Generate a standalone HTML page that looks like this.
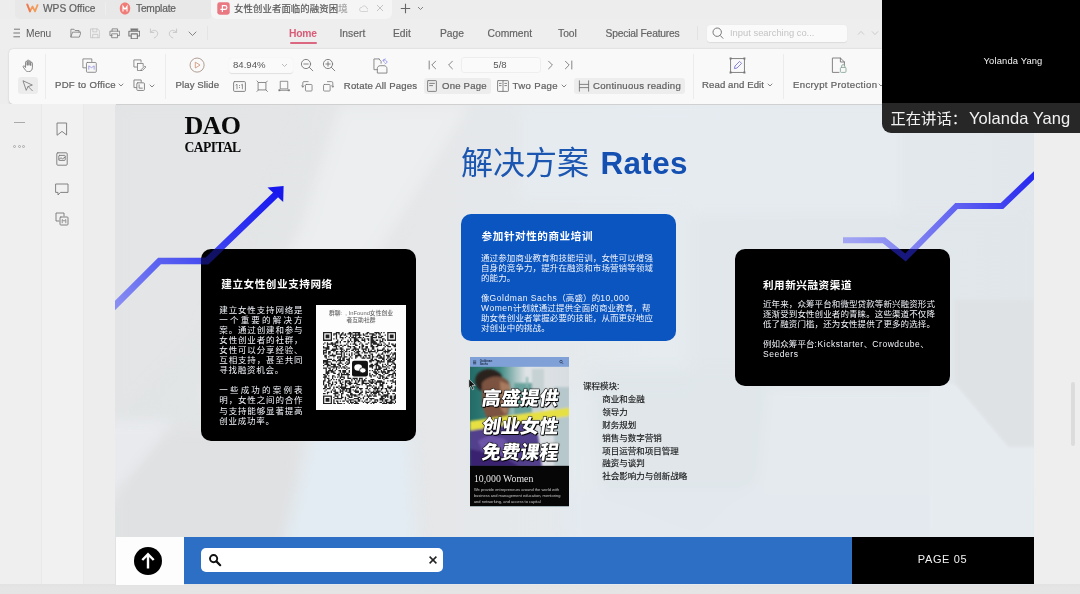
<!DOCTYPE html>
<html lang="zh">
<head>
<meta charset="utf-8">
<title>WPS Office - 女性创业者面临的融资困境</title>
<style>
*{box-sizing:border-box;margin:0;padding:0}
html,body{width:1080px;height:594px;overflow:hidden;background:#ededed;font-family:"Liberation Sans","Noto Sans CJK SC",sans-serif}
body{position:relative;font-family:"Liberation Sans","Noto Sans CJK SC",sans-serif;color:#444;font-size:10px;line-height:1}
.abs{position:absolute}
#app{left:0;top:0;width:1080px;height:594px;overflow:hidden;will-change:transform}
.t{position:absolute;white-space:nowrap}
/* chrome */
#tabbar{left:0;top:0;width:1080px;height:19px;background:#ededed}
#menurow{left:0;top:19px;width:1080px;height:31px;background:#eeeeee}
#toolbar{left:9px;top:49.4px;width:900px;height:54.2px;background:#f9f9f9;border-radius:4.5px;box-shadow:0 .8px 2px rgba(0,0,0,.17)}
.sep{position:absolute;width:1px;background:#ececec;top:54px;height:45px}
.lab{position:absolute;white-space:nowrap;font-size:9.6px;color:#626262;letter-spacing:.1px;-webkit-text-stroke:.22px #626262}
.btnbg{position:absolute;background:#e9e9e9;border-radius:3px}
/* slide */
#slide{left:115.3px;top:105px;width:919px;height:480.2px;overflow:hidden;background:#e3e6e8}
.card{position:absolute;border-radius:10px;color:#fff}
.card h3{position:absolute;font-size:10.6px;font-weight:700;white-space:nowrap;letter-spacing:.55px}
.card p{position:absolute;font-size:8.5px;line-height:10.08px;white-space:nowrap;letter-spacing:.1px;color:#f1f4fa}

.just{text-align:justify;text-align-last:justify;white-space:normal !important;letter-spacing:0}
.just .last{display:inline-block;width:100%;text-align:left;text-align-last:left;letter-spacing:.75px}
.lat{letter-spacing:.55px}
.big{font:900 19.1px/24px "Liberation Sans","Noto Sans CJK SC",sans-serif;color:#fff;-webkit-text-stroke:.9px #000;paint-order:stroke fill;letter-spacing:.1px;text-shadow:1px 1px 0 #000,0 0 2px rgba(0,0,0,.6);transform:skewX(-9deg);transform-origin:0 100%}
#course .i{padding-left:19.2px}

.tab{font-size:10.2px;line-height:13px;color:#606060;-webkit-text-stroke:.2px #606060}
.mtab{top:27.6px;font-size:10.3px;line-height:12px;color:#646464;-webkit-text-stroke:.18px #646464}
svg.ic{fill:none;stroke:#777;stroke-width:.9;stroke-linejoin:round;stroke-linecap:round}
</style>
</head>
<body>
<div id="app" class="abs">
<!-- ===== tab bar ===== -->
<div id="tabbar" class="abs"></div>
<div class="abs" style="left:15px;top:-4px;width:197px;height:22.6px;background:#e8e8e8;border-radius:5px"></div><div class="abs" style="left:105px;top:2px;width:1px;height:13px;background:#eeeeee"></div>
<div class="abs" style="left:211px;top:-4px;width:181px;height:23px;background:#f5f5f5;border-radius:6px"></div>
<svg class="abs" style="left:26px;top:3.4px" width="13" height="10" viewBox="0 0 13 10"><path d="M1.2 1.4L4 8.4 6.5 3.4 9 8.4 11.8 1.4" fill="none" stroke="#f39a58" stroke-width="1.7" stroke-linejoin="round"/><path d="M1.2 1.4L4 8.4" fill="none" stroke="#ee7a52" stroke-width="1.7" stroke-linecap="round"/></svg>
<div class="t tab" style="left:43px;top:2px">WPS Office</div>
<svg class="abs" style="left:119px;top:2px" width="12" height="13" viewBox="0 0 12 13"><path d="M6 .6c3 0 5.2 2.4 5.2 5.8S9 12.4 6 12.4.8 10 .8 6.4 3 .6 6 .6z" fill="#f07c78"/><path d="M4 9.5V4.2l2 3 2-3v5.3" fill="none" stroke="#fff" stroke-width="1.1"/></svg>
<div class="t tab" style="left:136px;top:2px;letter-spacing:-.2px">Template</div>
<svg class="abs" style="left:217px;top:2px" width="13" height="13" viewBox="0 0 13 13"><rect x=".3" y=".3" width="12.4" height="12.4" rx="2.4" fill="#e97882"/><path d="M5.4 10V3.6h2.6a1.9 1.9 0 010 3.8H3.4" fill="none" stroke="#fff" stroke-width="1.2"/></svg>
<div class="t tab" style="left:234px;top:2px;font-size:9.4px;letter-spacing:.1px;color:#565656">女性创业者面临的融资困<span style="opacity:.55">境</span></div>
<svg class="abs" style="left:358.6px;top:4.6px" width="9.6" height="7.2" viewBox="0 0 12 9"><path d="M3 8.2h6.4a2.1 2.1 0 00.3-4.2A3.2 3.2 0 003.6 3 2.6 2.6 0 003 8.2z" fill="none" stroke="#c4c4c4" stroke-width=".9"/></svg>
<svg class="abs" style="left:376px;top:4px" width="8" height="8" viewBox="0 0 8 8"><path d="M1 1l6 6M7 1L1 7" stroke="#bdbdbd" stroke-width=".9"/></svg>
<svg class="abs" style="left:400px;top:3px" width="11" height="11" viewBox="0 0 11 11"><path d="M5.5 .8v9.4M.8 5.5h9.4" stroke="#666" stroke-width="1.1"/></svg>
<svg class="abs" style="left:417px;top:6px" width="7" height="5" viewBox="0 0 7 5"><path d="M1 1l2.5 2.5L6 1" fill="none" stroke="#777" stroke-width=".9"/></svg>

<!-- ===== menu row ===== -->
<div id="menurow" class="abs"></div>
<svg class="abs" style="left:13px;top:28px" width="8" height="10" viewBox="0 0 8 10"><path d="M1 1.2h6M.4 5h6.6M.4 8.8h6.6" stroke="#777" stroke-width="1"/></svg>
<div class="t" style="left:26px;top:27.6px;font-size:10.2px;line-height:12px;color:#5a5a5a;letter-spacing:-.1px">Menu</div>
<svg class="abs ic" style="left:69.600px;top:28.4px" width="11.8" height="10" viewBox="0 0 13 12" preserveAspectRatio="none"><path d="M1 10.5v-9h3.4l1.2 1.5H10V5M1 10.5l1.8-5.5h9.4l-1.8 5.5z"/></svg>
<svg class="abs ic" style="left:89.600px;top:28px;opacity:.35" width="10.6" height="10.6" viewBox="0 0 12 12"><path d="M1 1h7.5L11 3.5V11H1zM3.2 1v3.4h4.6V1M3 11V7.2h6V11"/></svg>
<svg class="abs ic" style="left:108.8px;top:28px" width="11.6" height="10.6" viewBox="0 0 13 12"><path d="M3.4 3.6V1h6.2v2.6M3.4 8.6H1V3.6h11v5H9.6M3.4 6.6h6.2V11H3.4z"/></svg>
<svg class="abs ic" style="left:127.8px;top:26.8px" width="12.6" height="12.6" viewBox="0 0 14 14"><path d="M3 2.2h8M3.6 4.8V3.4h6.8v1.4M3.6 10H1V4.8h12V10h-2.6M3.6 7.6h6.8V13H3.6z" stroke-width="1.2"/></svg>
<svg class="abs ic" style="left:149px;top:28px;opacity:.35" width="10" height="11" viewBox="0 0 10 11"><path d="M1.4 1v3.4h3.4M1.6 4.2C3 2.2 6 1.6 7.8 3.4s1 5-2.6 6.6"/></svg>
<svg class="abs ic" style="left:168px;top:28px;opacity:.35" width="10" height="11" viewBox="0 0 10 11"><path d="M8.6 1v3.4H5.2M8.4 4.2C7 2.2 4 1.6 2.2 3.4s-1 5 2.6 6.6"/></svg>
<svg class="abs ic" style="left:188px;top:31px" width="9" height="6" viewBox="0 0 9 6"><path d="M1 1l3.5 3.5L8 1"/></svg>
<div class="abs" style="left:207px;top:26px;width:1px;height:14px;background:#e4e4e4"></div>

<div class="t mtab" style="left:289px;color:#d85c76;font-weight:700;letter-spacing:-.2px;-webkit-text-stroke:0">Home</div>
<div class="abs" style="left:290px;top:42px;width:26.5px;height:1.5px;background:#dc6780;border-radius:1px"></div>
<div class="t mtab" style="left:339.5px">Insert</div>
<div class="t mtab" style="left:393px">Edit</div>
<div class="t mtab" style="left:440px">Page</div>
<div class="t mtab" style="left:487.5px">Comment</div>
<div class="t mtab" style="left:558px">Tool</div>
<div class="t mtab" style="left:605.5px;letter-spacing:-.2px">Special Features</div>
<div class="abs" style="left:697px;top:26px;width:1px;height:14px;background:#e2e2e2"></div>
<div class="abs" style="left:707px;top:25.4px;width:140px;height:16.6px;background:#fafafa;border-radius:3px;box-shadow:0 .5px 1px rgba(0,0,0,.08)"></div>
<svg class="abs" style="left:711px;top:26px" width="14" height="14" viewBox="0 0 14 14"><circle cx="6.2" cy="6.2" r="4.2" fill="none" stroke="#777" stroke-width="1"/><path d="M9.2 9.4l3 3.2" stroke="#777" stroke-width="1"/></svg>
<div class="t" style="left:730px;top:27px;font-size:9.4px;line-height:12px;color:#c4c4c4">Input searching co...</div>
<svg class="abs" style="left:857px;top:30px" width="8" height="6" viewBox="0 0 8 6"><path d="M1 4.6L4 1.4l3 3.2" fill="none" stroke="#ccc" stroke-width="1"/></svg>
<svg class="abs" style="left:871px;top:30px" width="8" height="6" viewBox="0 0 8 6"><path d="M1 1.4L4 4.6l3-3.2" fill="none" stroke="#ccc" stroke-width="1"/></svg>

<!-- ===== toolbar ===== -->
<div id="toolbar" class="abs"></div>
<div class="sep" style="left:45px"></div>
<div class="sep" style="left:165px"></div>
<div class="sep" style="left:693px"></div>
<div class="sep" style="left:783px"></div>
<!-- hand / pointer -->
<svg class="abs ic" style="left:21.6px;top:58.6px" width="12.6" height="13.4" viewBox="0 0 13 14"><path d="M3.6 8.2V3.4a.9.9 0 011.8 0v3M5.4 6.2V2a.9.9 0 011.8 0v4.2M7.2 6.2V2.8a.9.9 0 011.8 0v3.6M9 6.6V4.4a.9.9 0 011.8 0v4.2c0 3-1.6 4.6-4 4.6-2 0-3-.8-4-2.6L1.2 8.4c-.5-1 .6-1.8 1.4-1l1 1.4"/></svg>
<div class="btnbg" style="left:17.8px;top:77.4px;width:20.6px;height:16.6px;background:#ececec"></div>
<svg class="abs ic" style="left:22.4px;top:80px" width="12" height="12" viewBox="0 0 13 13"><path d="M1.2 1.2l3.4 10 1.8-4 4.4-1.6zM6.6 7l4.6 4.6"/></svg>
<!-- pdf to office -->
<svg class="abs ic" style="left:81.6px;top:57.8px" width="15.2" height="15.2" viewBox="0 0 17 17"><path d="M11 4V1H1v10h3"/><rect x="5" y="5" width="11" height="11" rx="1" fill="#f7f7f7"/><path d="M7.6 12.6V8.8l3 2 3-2v3.8" stroke="#8e8ee0"/></svg>
<div class="lab" style="left:55px;top:80px;letter-spacing:.27px">PDF to Office</div>
<svg class="abs ic" style="left:118px;top:83px" width="6" height="5" viewBox="0 0 6 5"><path d="M1 1l2 2 2-2"/></svg>
<svg class="abs ic" style="left:133.4px;top:58.6px" width="13.4" height="12.5" viewBox="0 0 15 14"><path d="M9 3.6V1H1v8h3"/><path d="M5 5h6.4v3M5 5v8h4"/><path d="M9.6 11.4l3.6-3.6 1.2 1.2-3.6 3.6-1.6.4z" stroke-width=".9"/></svg>
<svg class="abs ic" style="left:133px;top:79.4px" width="12.4" height="12.4" viewBox="0 0 13 13"><path d="M8.6 3.4V1H1v8h2.6"/><rect x="4" y="4" width="8" height="8" rx="1"/><path d="M6.4 6v3.6h3.4"/></svg>
<svg class="abs ic" style="left:149px;top:84px" width="6" height="5" viewBox="0 0 6 5"><path d="M1 1l2 2 2-2"/></svg>
<!-- play slide -->
<svg class="abs" style="left:189.4px;top:57.4px" width="16.2" height="16.2" viewBox="0 0 17 17"><circle cx="8.5" cy="8.5" r="7.4" fill="none" stroke="#a8948a" stroke-width=".95"/><path d="M6.6 5.4l5 3.1-5 3.1z" fill="none" stroke="#d29a82" stroke-width=".95" stroke-linejoin="round"/></svg>
<div class="lab" style="left:175.5px;top:80px">Play Slide</div>
<!-- zoom -->
<div class="abs" style="left:229px;top:57.6px;width:64px;height:15.8px;background:#fafafa;border-radius:3px;box-shadow:0 .6px 1px rgba(0,0,0,.10)"></div>
<div class="t" style="left:233px;top:59px;font-size:9.6px;line-height:12px;color:#555">84.94%</div>
<svg class="abs" style="left:281px;top:63px" width="7" height="5" viewBox="0 0 7 5"><path d="M1 1l2.5 2.5L6 1" fill="none" stroke="#bbb" stroke-width="1"/></svg>
<svg class="abs ic" style="left:300px;top:58px" width="14" height="14" viewBox="0 0 14 14"><circle cx="6" cy="6" r="4.6"/><path d="M3.8 6h4.4M9.4 9.4l3.4 3.4"/></svg>
<svg class="abs ic" style="left:322px;top:58px" width="14" height="14" viewBox="0 0 14 14"><circle cx="6" cy="6" r="4.6"/><path d="M3.8 6h4.4M6 3.8v4.4M9.4 9.4l3.4 3.4"/></svg>
<svg class="abs ic" style="left:233px;top:80.6px" width="13" height="11" viewBox="0 0 13 11"><rect x=".6" y=".6" width="11.8" height="9.8" rx="1"/><path d="M3 4l1-.8v4.6M8.4 4l1-.8v4.6M6.5 4.4v.3M6.5 6.4v.3" stroke-width=".8"/></svg>
<svg class="abs ic" style="left:255.6px;top:79.6px" width="12.4" height="12.4" viewBox="0 0 13 13"><rect x="2.6" y="2.6" width="7.8" height="7.8"/><path d="M1 1l1.6 1.6M12 1l-1.6 1.6M1 12l1.6-1.6M12 12l-1.6-1.6"/></svg>
<svg class="abs ic" style="left:278px;top:80px" width="12.4" height="11.6" viewBox="0 0 14 13"><path d="M3 1.4h8v8.6H3zM1.4 11.6h11.2"/><path d="M1 10.8h1.4v1.6H1zM11.6 10.8H13v1.6h-1.4z" fill="#777" stroke-width=".4"/></svg>
<svg class="abs ic" style="left:301px;top:80.4px" width="11.6" height="11.6" viewBox="0 0 13 13"><rect x="5" y="5" width="7.4" height="7.4" rx="1"/><path d="M2 8V3.2a1.4 1.4 0 011.4-1.4H8M.6 6.4L2 8l1.4-1.6"/></svg>
<svg class="abs ic" style="left:322.8px;top:80.4px" width="11.6" height="11.6" viewBox="0 0 13 13"><rect x=".6" y="5" width="7.4" height="7.4" rx="1"/><path d="M11 8V3.2a1.4 1.4 0 00-1.4-1.4H5M12.4 6.4L11 8 9.6 6.4"/></svg>
<!-- rotate all -->
<svg class="abs ic" style="left:372.6px;top:58px" width="16" height="16" viewBox="0 0 17 17"><path d="M6.4 1H1v11.4h3.4M6.4 1L8.6 3.6v2"/><path d="M4.6 15.6v-4.4c0-1.6 1.2-3 3-3h4.200c1.800 0 3 1.400 3 3v4.400z"/><path d="M10.6 2.400c1.800-.9 3.600-.2 4.200 1.600M13 1l-2.400 1.400 1.400 2.200M12.800 6.200l2.200-1.600" stroke="#8a8ae6" stroke-width=".8"/></svg>
<div class="lab" style="left:343.8px;top:80.8px;letter-spacing:.15px">Rotate All Pages</div>
<!-- page nav -->
<svg class="abs ic" style="left:428px;top:60px" width="9" height="10" viewBox="0 0 9 10"><path d="M1.2 1v8M7.6 1.2L3.8 5l3.8 3.8"/></svg>
<svg class="abs ic" style="left:447px;top:60px" width="7" height="10" viewBox="0 0 7 10"><path d="M5.4 1.2L1.6 5l3.8 3.8"/></svg>
<div class="abs" style="left:461px;top:57px;width:80px;height:16.2px;background:#fafafa;border-radius:3px;border:1px solid #eeeeee"></div>
<div class="t" style="left:460px;top:59px;width:80px;text-align:center;font-size:9.6px;line-height:12px;color:#555">5/8</div>
<svg class="abs ic" style="left:547px;top:60px" width="7" height="10" viewBox="0 0 7 10"><path d="M1.6 1.2L5.4 5 1.6 8.8"/></svg>
<svg class="abs ic" style="left:564px;top:60px" width="9" height="10" viewBox="0 0 9 10"><path d="M7.8 1v8M1.4 1.2L5.2 5 1.4 8.8"/></svg>
<!-- view mode -->
<div class="btnbg" style="left:424px;top:78.2px;width:67px;height:15.8px;background:#ededed"></div>
<svg class="abs ic" style="left:427px;top:80px" width="10" height="12" viewBox="0 0 10 12"><rect x=".6" y=".6" width="8.8" height="10.8" rx=".6"/><path d="M2.6 3.4h4.8M2.6 5.6h3"/></svg>
<div class="lab" style="left:442px;top:80.5px;letter-spacing:.2px">One Page</div>
<svg class="abs ic" style="left:497px;top:80px" width="12" height="12" viewBox="0 0 12 12"><rect x=".6" y=".6" width="10.8" height="10.8" rx=".6"/><path d="M6 .6v10.8M2.4 3.4h1.8M2.4 5.6h1.8M7.8 3.4h1.8M7.8 5.6h1.8"/></svg>
<div class="lab" style="left:512.5px;top:80.5px;letter-spacing:.35px">Two Page</div>
<svg class="abs ic" style="left:561px;top:84px" width="6" height="5" viewBox="0 0 6 5"><path d="M1 1l2 2 2-2"/></svg>
<div class="btnbg" style="left:574px;top:78.2px;width:111px;height:15.8px;background:#ededed"></div>
<svg class="abs ic" style="left:578px;top:80px" width="12" height="12" viewBox="0 0 12 12"><path d="M1.4 .8v10.4M10.600 .8v10.4M1.4 4.4h9.2M1.4 7.600h9.2"/></svg>
<div class="lab" style="left:593px;top:80.5px;letter-spacing:.27px">Continuous reading</div>
<!-- read & edit -->
<svg class="abs" style="left:729px;top:57px" width="17" height="17" viewBox="0 0 17 17"><rect x="1.6" y="1.6" width="13.8" height="13.8" fill="none" stroke="#777" stroke-width=".9"/><path d="M.6.6h2v2h-2zM14.4.6h2v2h-2zM.6 14.4h2v2h-2zM14.4 14.4h2v2h-2z" fill="#777"/><path d="M5.4 11.6l.6-2.6 4.6-4.6 2 2L8 11z" fill="none" stroke="#7878d8" stroke-width=".9"/></svg>
<div class="lab" style="left:702px;top:80px">Read and Edit</div>
<svg class="abs ic" style="left:767px;top:83px" width="6" height="5" viewBox="0 0 6 5"><path d="M1 1l2 2 2-2"/></svg>
<!-- encrypt -->
<svg class="abs ic" style="left:831px;top:57px" width="16" height="17" viewBox="0 0 16 17"><path d="M8 15.4H1.4V1h8l4 4v3.6M9.4 1v4h4"/><rect x="9.4" y="10.4" width="5.6" height="5" rx="1" stroke="#8aa89a"/><path d="M10.6 10.4V9.2a1.6 1.6 0 013.2 0v1.2" stroke="#8aa89a"/></svg>
<div class="lab" style="left:793px;top:80px;letter-spacing:.33px">Encrypt Protection</div>
<svg class="abs ic" style="left:878px;top:83px" width="6" height="5" viewBox="0 0 6 5"><path d="M1 1l2 2 2-2"/></svg>

<!-- ===== left side panels ===== -->
<div class="abs" style="left:0;top:104px;width:41px;height:490px;background:#efefef"></div>
<div class="abs" style="left:41px;top:104px;width:43px;height:490px;background:#f1f1f1;border-left:1px solid #e9e9e9;border-right:1px solid #e9e9e9"></div>
<div class="abs" style="left:84px;top:104px;width:32px;height:490px;background:#ededed"></div>
<div class="abs" style="left:14px;top:122px;width:11px;height:1px;background:#aaa"></div>
<div class="abs" style="left:13px;top:145px;width:3px;height:3px;border-radius:50%;border:.8px solid #aaa;box-shadow:none"></div>
<div class="abs" style="left:17.5px;top:145px;width:3px;height:3px;border-radius:50%;border:.8px solid #aaa"></div>
<div class="abs" style="left:22px;top:145px;width:3px;height:3px;border-radius:50%;border:.8px solid #aaa"></div>
<svg class="abs ic" style="left:56px;top:122px" width="12" height="14" viewBox="0 0 12 14"><path d="M1.4 1h9.2v12L6 9.4 1.4 13z"/></svg>
<svg class="abs ic" style="left:56px;top:152px" width="12" height="14" viewBox="0 0 12 14"><rect x=".8" y=".8" width="10.4" height="12.4" rx="1"/><rect x="2.8" y="3.4" width="6.4" height="5" rx=".6"/><path d="M3 7.4l2-1.6 1.6 1 2.4-1.6"/></svg>
<svg class="abs ic" style="left:55px;top:183px" width="14" height="13" viewBox="0 0 14 13"><path d="M1 1h12v8.4H5.4L3 12V9.4H1z"/></svg>
<svg class="abs ic" style="left:55px;top:212px" width="14" height="14" viewBox="0 0 14 14"><path d="M9 4V1H1v8h3"/><rect x="5" y="5" width="8" height="8" rx=".8"/><path d="M7.2 10.8V7.6l1.8 1.6 1.8-1.6v3.2" stroke-width=".8"/></svg>

<!-- ===== right gutter / bottom ===== -->
<div class="abs" style="left:1034px;top:104px;width:46px;height:490px;background:#eeeeee"></div>
<div class="abs" style="left:1070.6px;top:382px;width:4.6px;height:64px;background:#dcdcdc;border-radius:2.3px"></div>
<div class="abs" style="left:0;top:584.2px;width:1080px;height:10px;background:linear-gradient(#e2e2e2,#e5e5e5 40%,#e4e4e4)"></div>
<div id="slide" class="abs">
<div class="abs" id="sw" style="left:-115.3px;top:-105px;width:1080px;height:594px">
  <!-- background art -->
  <svg class="abs" style="left:114px;top:105px" width="921" height="480" viewBox="114 105 921 480">
    <defs>
      <linearGradient id="bgA" x1="0" y1="0" x2="1" y2="0">
        <stop offset="0" stop-color="#e1e4e5"/><stop offset=".35" stop-color="#e5e7e9"/><stop offset=".6" stop-color="#e5ebef"/><stop offset="1" stop-color="#e2e7eb"/>
      </linearGradient>
      <linearGradient id="arL" gradientUnits="userSpaceOnUse" x1="116" y1="305" x2="285" y2="188">
        <stop offset="0" stop-color="#8a8ef3"/><stop offset=".25" stop-color="#5f66f0"/><stop offset=".5" stop-color="#4248f0"/><stop offset="1" stop-color="#1414f0"/>
      </linearGradient>
      <linearGradient id="arR" gradientUnits="userSpaceOnUse" x1="843" y1="240" x2="1034" y2="175">
        <stop offset="0" stop-color="#9496f4" stop-opacity=".8"/><stop offset=".5" stop-color="#6062f2" stop-opacity=".92"/><stop offset=".85" stop-color="#3a3cf0"/><stop offset="1" stop-color="#2426f0"/>
      </linearGradient>
      <filter id="soft" x="-20%" y="-20%" width="140%" height="140%"><feGaussianBlur stdDeviation="7"/></filter><filter id="soft2" x="-20%" y="-20%" width="140%" height="140%"><feGaussianBlur stdDeviation="1.5"/></filter>
    </defs>
    <rect x="114" y="105" width="921" height="480" fill="url(#bgA)"/>
    <g filter="url(#soft)">
      <polygon points="116,105 300,105 200,330 116,420" fill="#e3e5e6" opacity=".8"/>
      <polygon points="340,105 470,105 380,250 250,400 200,400 300,230" fill="#eceeef" opacity=".9"/>
      <polygon points="140,430 300,430 290,585 116,585 116,500" fill="#dfe0e2" opacity=".95"/><polygon points="100,420 175,420 100,510" fill="#e8eaee"/>
      <polygon points="312,430 410,430 420,585 272,585" fill="#e3ecf2" opacity=".95"/>
      <polygon points="520,105 900,105 900,215 690,215 690,200 520,200" fill="#e5ebf0" opacity=".9"/>
      <polygon points="690,215 1034,215 1034,400 690,400" fill="#e0e6ea" opacity=".8"/>
      <polygon points="570,390 958,390 1008,447 1034,447 1034,585 570,585" fill="#e4eaee"/><polygon points="590,370 770,370 760,480 700,540 600,500" fill="#dfe5e9" opacity=".9"/><polygon points="560,490 1034,490 1034,540 560,540" fill="#e2e9ef" opacity=".8"/>
    </g>
    <g filter="url(#soft2)">
      <polygon points="955,300 1034,300 1034,447 1008,447 955,384" fill="#dfe2e4"/>
      <polygon points="955,384 1008,447 1034,447 1034,540 930,540 930,384" fill="#e6ebf0"/>
    </g>
    <polyline points="111.5,309 159.5,261 207,261 276,194.5" fill="none" stroke="url(#arL)" stroke-width="6.7" stroke-linejoin="miter"/>
    <polygon points="267.5,187.6 283.6,186 283.2,202" fill="#1717ee"/>
    <polyline points="843,240.3 884,240.3 905.5,257.5 956.5,206 1002,206 1038,171.5" fill="none" stroke="url(#arR)" stroke-width="6" stroke-linejoin="miter"/>
  </svg>

  <div class="t" style="left:184.6px;top:111px;font:700 26px/30px 'Liberation Serif',serif;color:#0a0a0a;letter-spacing:-.75px">DAO</div>
  <div class="t" style="left:184.6px;top:138.8px;font:700 13.6px/17px 'Liberation Serif',serif;color:#0a0a0a;letter-spacing:-.6px">CAPITAL</div>

  <div class="t" id="title" style="left:461px;top:139.6px;height:46px;line-height:46px;color:#1b56b1"><span style="font:400 32px/46px 'Liberation Sans','Noto Sans CJK SC',sans-serif">解决方案</span><span style="font:700 31.4px/46px 'Liberation Sans',sans-serif;letter-spacing:.35px;margin-left:11.5px;color:#1450b2;position:relative;top:.6px">Rates</span></div>

  <!-- left card -->
  <div class="card" style="left:201px;top:249px;width:215px;height:192px;background:#000">
    <h3 style="left:20.3px;top:30.4px">建立女性创业支持网络</h3>
    <p class="just" style="left:18.3px;top:55.6px;width:83.4px;line-height:10.1px">建立女性支持网络是<br>一个重要的解决方<br>案。通过创建和参与<br>女性创业者的社群，<br>女性可以分享经验、<br>互相支持，甚至共同<br><span class="last">寻找融资机会。</span><br>&nbsp;<br>一些成功的案例表<br>明，女性之间的合作<br>与支持能够显著提高<br><span class="last">创业成功率。</span></p>
    <div class="abs" style="left:115px;top:56px;width:90px;height:105px;background:#fdfdfd">
      <div class="t" style="left:0;width:90px;top:4.6px;text-align:center;font-size:5.8px;line-height:7.2px;color:#666;white-space:normal;font-weight:500">群聊:&nbsp; , InFound女性创业<br>者互助社群</div>
      <svg class="abs" style="left:6.7px;top:26.5px" width="73.2" height="72.4" viewBox="0 0 57 57" preserveAspectRatio="none"><path fill="#222" d="M0 0h7v1h-7zM10 0h3v1h-3zM15 0h1v1h-1zM20 0h2v1h-2zM23 0h6v1h-6zM34 0h2v1h-2zM40 0h4v1h-4zM45 0h1v1h-1zM47 0h1v1h-1zM50 0h7v1h-7zM0 1h1v1h-1zM6 1h1v1h-1zM8 1h3v1h-3zM12 1h1v1h-1zM14 1h2v1h-2zM17 1h1v1h-1zM19 1h4v1h-4zM25 1h1v1h-1zM27 1h2v1h-2zM31 1h1v1h-1zM33 1h2v1h-2zM36 1h4v1h-4zM41 1h1v1h-1zM43 1h2v1h-2zM50 1h1v1h-1zM56 1h1v1h-1zM0 2h1v1h-1zM2 2h3v1h-3zM6 2h1v1h-1zM8 2h1v1h-1zM10 2h1v1h-1zM13 2h2v1h-2zM16 2h2v1h-2zM21 2h1v1h-1zM23 2h7v1h-7zM31 2h2v1h-2zM38 2h3v1h-3zM44 2h1v1h-1zM48 2h1v1h-1zM50 2h1v1h-1zM52 2h3v1h-3zM56 2h1v1h-1zM0 3h1v1h-1zM2 3h3v1h-3zM6 3h1v1h-1zM10 3h1v1h-1zM13 3h1v1h-1zM18 3h1v1h-1zM21 3h1v1h-1zM23 3h1v1h-1zM25 3h1v1h-1zM28 3h1v1h-1zM33 3h3v1h-3zM37 3h2v1h-2zM41 3h1v1h-1zM43 3h1v1h-1zM45 3h2v1h-2zM50 3h1v1h-1zM52 3h3v1h-3zM56 3h1v1h-1zM0 4h1v1h-1zM2 4h3v1h-3zM6 4h1v1h-1zM10 4h1v1h-1zM13 4h3v1h-3zM17 4h1v1h-1zM20 4h1v1h-1zM22 4h4v1h-4zM27 4h3v1h-3zM31 4h1v1h-1zM37 4h5v1h-5zM43 4h3v1h-3zM50 4h1v1h-1zM52 4h3v1h-3zM56 4h1v1h-1zM0 5h1v1h-1zM6 5h1v1h-1zM8 5h1v1h-1zM10 5h1v1h-1zM15 5h1v1h-1zM21 5h1v1h-1zM24 5h3v1h-3zM30 5h1v1h-1zM32 5h1v1h-1zM34 5h2v1h-2zM37 5h2v1h-2zM46 5h2v1h-2zM50 5h1v1h-1zM56 5h1v1h-1zM0 6h7v1h-7zM11 6h1v1h-1zM14 6h1v1h-1zM19 6h1v1h-1zM21 6h1v1h-1zM24 6h4v1h-4zM30 6h3v1h-3zM35 6h1v1h-1zM37 6h3v1h-3zM41 6h2v1h-2zM44 6h1v1h-1zM46 6h1v1h-1zM48 6h1v1h-1zM50 6h7v1h-7zM10 7h2v1h-2zM13 7h1v1h-1zM16 7h2v1h-2zM19 7h2v1h-2zM22 7h1v1h-1zM24 7h2v1h-2zM27 7h2v1h-2zM32 7h1v1h-1zM37 7h4v1h-4zM44 7h3v1h-3zM1 8h1v1h-1zM3 8h1v1h-1zM6 8h2v1h-2zM9 8h3v1h-3zM13 8h1v1h-1zM19 8h1v1h-1zM24 8h1v1h-1zM29 8h1v1h-1zM35 8h1v1h-1zM37 8h5v1h-5zM44 8h1v1h-1zM47 8h1v1h-1zM51 8h1v1h-1zM0 9h1v1h-1zM3 9h7v1h-7zM18 9h1v1h-1zM21 9h1v1h-1zM23 9h3v1h-3zM28 9h1v1h-1zM30 9h1v1h-1zM33 9h2v1h-2zM37 9h1v1h-1zM39 9h5v1h-5zM45 9h1v1h-1zM48 9h1v1h-1zM51 9h1v1h-1zM53 9h2v1h-2zM56 9h1v1h-1zM3 10h1v1h-1zM7 10h1v1h-1zM9 10h3v1h-3zM13 10h2v1h-2zM16 10h2v1h-2zM19 10h1v1h-1zM25 10h2v1h-2zM30 10h2v1h-2zM37 10h2v1h-2zM42 10h4v1h-4zM47 10h1v1h-1zM49 10h2v1h-2zM54 10h3v1h-3zM0 11h1v1h-1zM3 11h2v1h-2zM8 11h3v1h-3zM12 11h1v1h-1zM15 11h1v1h-1zM19 11h3v1h-3zM23 11h2v1h-2zM28 11h1v1h-1zM30 11h2v1h-2zM33 11h2v1h-2zM37 11h3v1h-3zM41 11h2v1h-2zM48 11h1v1h-1zM50 11h3v1h-3zM55 11h2v1h-2zM0 12h5v1h-5zM10 12h1v1h-1zM13 12h2v1h-2zM21 12h1v1h-1zM24 12h2v1h-2zM28 12h1v1h-1zM30 12h1v1h-1zM33 12h2v1h-2zM38 12h2v1h-2zM47 12h1v1h-1zM2 13h3v1h-3zM7 13h5v1h-5zM13 13h3v1h-3zM18 13h3v1h-3zM23 13h5v1h-5zM30 13h4v1h-4zM35 13h1v1h-1zM38 13h2v1h-2zM42 13h1v1h-1zM46 13h2v1h-2zM50 13h1v1h-1zM53 13h1v1h-1zM56 13h1v1h-1zM0 14h3v1h-3zM6 14h4v1h-4zM14 14h1v1h-1zM16 14h1v1h-1zM18 14h1v1h-1zM22 14h2v1h-2zM25 14h1v1h-1zM27 14h1v1h-1zM31 14h1v1h-1zM33 14h1v1h-1zM35 14h1v1h-1zM37 14h1v1h-1zM40 14h1v1h-1zM42 14h5v1h-5zM48 14h1v1h-1zM50 14h3v1h-3zM56 14h1v1h-1zM0 15h1v1h-1zM2 15h1v1h-1zM4 15h2v1h-2zM8 15h1v1h-1zM10 15h2v1h-2zM13 15h3v1h-3zM17 15h2v1h-2zM20 15h1v1h-1zM24 15h1v1h-1zM26 15h3v1h-3zM31 15h2v1h-2zM35 15h6v1h-6zM42 15h1v1h-1zM47 15h5v1h-5zM0 16h3v1h-3zM4 16h2v1h-2zM10 16h1v1h-1zM14 16h1v1h-1zM16 16h1v1h-1zM22 16h1v1h-1zM25 16h3v1h-3zM30 16h1v1h-1zM32 16h3v1h-3zM36 16h1v1h-1zM41 16h1v1h-1zM46 16h1v1h-1zM48 16h1v1h-1zM50 16h1v1h-1zM53 16h1v1h-1zM55 16h2v1h-2zM0 17h1v1h-1zM4 17h1v1h-1zM7 17h1v1h-1zM10 17h5v1h-5zM16 17h1v1h-1zM18 17h1v1h-1zM20 17h1v1h-1zM22 17h1v1h-1zM24 17h1v1h-1zM27 17h2v1h-2zM37 17h2v1h-2zM43 17h1v1h-1zM45 17h2v1h-2zM52 17h1v1h-1zM54 17h3v1h-3zM1 18h2v1h-2zM5 18h5v1h-5zM14 18h1v1h-1zM16 18h1v1h-1zM20 18h1v1h-1zM22 18h1v1h-1zM25 18h5v1h-5zM32 18h2v1h-2zM35 18h2v1h-2zM38 18h1v1h-1zM42 18h3v1h-3zM47 18h1v1h-1zM49 18h3v1h-3zM54 18h1v1h-1zM56 18h1v1h-1zM1 19h2v1h-2zM4 19h1v1h-1zM8 19h1v1h-1zM11 19h4v1h-4zM16 19h3v1h-3zM21 19h1v1h-1zM25 19h2v1h-2zM29 19h1v1h-1zM31 19h1v1h-1zM33 19h1v1h-1zM36 19h1v1h-1zM38 19h2v1h-2zM41 19h2v1h-2zM44 19h2v1h-2zM47 19h1v1h-1zM50 19h2v1h-2zM53 19h1v1h-1zM56 19h1v1h-1zM2 20h1v1h-1zM11 20h1v1h-1zM13 20h1v1h-1zM15 20h2v1h-2zM20 20h1v1h-1zM22 20h1v1h-1zM25 20h1v1h-1zM30 20h3v1h-3zM34 20h3v1h-3zM38 20h1v1h-1zM43 20h5v1h-5zM50 20h1v1h-1zM52 20h1v1h-1zM54 20h3v1h-3zM3 21h4v1h-4zM8 21h1v1h-1zM12 21h2v1h-2zM15 21h2v1h-2zM18 21h3v1h-3zM37 21h2v1h-2zM40 21h2v1h-2zM46 21h2v1h-2zM49 21h1v1h-1zM51 21h3v1h-3zM55 21h2v1h-2zM0 22h4v1h-4zM7 22h3v1h-3zM11 22h6v1h-6zM19 22h2v1h-2zM36 22h4v1h-4zM41 22h3v1h-3zM45 22h1v1h-1zM47 22h1v1h-1zM50 22h3v1h-3zM54 22h2v1h-2zM0 23h6v1h-6zM10 23h1v1h-1zM13 23h1v1h-1zM18 23h1v1h-1zM20 23h1v1h-1zM36 23h2v1h-2zM42 23h6v1h-6zM50 23h5v1h-5zM0 24h1v1h-1zM2 24h2v1h-2zM6 24h1v1h-1zM12 24h3v1h-3zM17 24h1v1h-1zM19 24h2v1h-2zM41 24h2v1h-2zM44 24h1v1h-1zM50 24h1v1h-1zM54 24h2v1h-2zM1 25h4v1h-4zM6 25h4v1h-4zM11 25h2v1h-2zM15 25h1v1h-1zM18 25h2v1h-2zM37 25h2v1h-2zM40 25h3v1h-3zM46 25h1v1h-1zM48 25h1v1h-1zM50 25h1v1h-1zM53 25h1v1h-1zM55 25h2v1h-2zM0 26h1v1h-1zM3 26h3v1h-3zM8 26h2v1h-2zM12 26h2v1h-2zM17 26h1v1h-1zM36 26h4v1h-4zM41 26h3v1h-3zM46 26h1v1h-1zM49 26h1v1h-1zM51 26h2v1h-2zM56 26h1v1h-1zM3 27h1v1h-1zM6 27h6v1h-6zM13 27h1v1h-1zM15 27h2v1h-2zM18 27h1v1h-1zM36 27h3v1h-3zM41 27h1v1h-1zM43 27h2v1h-2zM46 27h3v1h-3zM50 27h1v1h-1zM54 27h3v1h-3zM0 28h3v1h-3zM4 28h2v1h-2zM8 28h1v1h-1zM10 28h1v1h-1zM12 28h1v1h-1zM14 28h1v1h-1zM16 28h2v1h-2zM19 28h2v1h-2zM38 28h1v1h-1zM41 28h1v1h-1zM43 28h3v1h-3zM49 28h1v1h-1zM51 28h1v1h-1zM55 28h2v1h-2zM2 29h1v1h-1zM5 29h1v1h-1zM7 29h1v1h-1zM10 29h1v1h-1zM18 29h1v1h-1zM40 29h5v1h-5zM47 29h3v1h-3zM53 29h1v1h-1zM55 29h1v1h-1zM2 30h1v1h-1zM4 30h4v1h-4zM9 30h1v1h-1zM12 30h2v1h-2zM15 30h3v1h-3zM20 30h1v1h-1zM36 30h1v1h-1zM38 30h1v1h-1zM40 30h1v1h-1zM42 30h1v1h-1zM45 30h1v1h-1zM47 30h1v1h-1zM50 30h5v1h-5zM56 30h1v1h-1zM2 31h3v1h-3zM6 31h3v1h-3zM13 31h1v1h-1zM15 31h3v1h-3zM20 31h1v1h-1zM39 31h3v1h-3zM43 31h1v1h-1zM45 31h4v1h-4zM50 31h2v1h-2zM55 31h1v1h-1zM2 32h3v1h-3zM8 32h2v1h-2zM12 32h1v1h-1zM14 32h1v1h-1zM16 32h1v1h-1zM18 32h2v1h-2zM36 32h1v1h-1zM40 32h3v1h-3zM46 32h1v1h-1zM48 32h3v1h-3zM54 32h3v1h-3zM0 33h2v1h-2zM3 33h1v1h-1zM11 33h2v1h-2zM14 33h7v1h-7zM36 33h1v1h-1zM38 33h1v1h-1zM41 33h1v1h-1zM43 33h2v1h-2zM47 33h1v1h-1zM51 33h4v1h-4zM56 33h1v1h-1zM1 34h2v1h-2zM4 34h1v1h-1zM7 34h2v1h-2zM12 34h1v1h-1zM14 34h1v1h-1zM19 34h1v1h-1zM36 34h2v1h-2zM39 34h2v1h-2zM44 34h3v1h-3zM50 34h2v1h-2zM54 34h1v1h-1zM56 34h1v1h-1zM0 35h3v1h-3zM7 35h1v1h-1zM9 35h1v1h-1zM11 35h1v1h-1zM13 35h4v1h-4zM19 35h1v1h-1zM37 35h1v1h-1zM42 35h1v1h-1zM44 35h1v1h-1zM46 35h2v1h-2zM49 35h1v1h-1zM53 35h2v1h-2zM1 36h1v1h-1zM3 36h2v1h-2zM7 36h1v1h-1zM13 36h1v1h-1zM16 36h1v1h-1zM19 36h3v1h-3zM23 36h4v1h-4zM28 36h3v1h-3zM33 36h1v1h-1zM43 36h2v1h-2zM46 36h1v1h-1zM48 36h3v1h-3zM55 36h2v1h-2zM1 37h1v1h-1zM4 37h1v1h-1zM6 37h1v1h-1zM8 37h1v1h-1zM10 37h1v1h-1zM12 37h1v1h-1zM14 37h2v1h-2zM22 37h1v1h-1zM24 37h1v1h-1zM26 37h1v1h-1zM28 37h1v1h-1zM30 37h1v1h-1zM32 37h1v1h-1zM37 37h3v1h-3zM47 37h1v1h-1zM54 37h1v1h-1zM0 38h2v1h-2zM4 38h2v1h-2zM12 38h2v1h-2zM17 38h4v1h-4zM22 38h1v1h-1zM25 38h1v1h-1zM27 38h2v1h-2zM30 38h4v1h-4zM35 38h2v1h-2zM38 38h1v1h-1zM40 38h1v1h-1zM42 38h4v1h-4zM50 38h1v1h-1zM52 38h3v1h-3zM56 38h1v1h-1zM0 39h1v1h-1zM3 39h2v1h-2zM7 39h1v1h-1zM9 39h2v1h-2zM13 39h1v1h-1zM15 39h1v1h-1zM17 39h2v1h-2zM20 39h2v1h-2zM25 39h1v1h-1zM27 39h1v1h-1zM30 39h2v1h-2zM36 39h4v1h-4zM41 39h7v1h-7zM54 39h3v1h-3zM0 40h1v1h-1zM4 40h2v1h-2zM7 40h1v1h-1zM10 40h1v1h-1zM13 40h2v1h-2zM17 40h1v1h-1zM19 40h4v1h-4zM24 40h3v1h-3zM30 40h6v1h-6zM37 40h2v1h-2zM40 40h2v1h-2zM44 40h1v1h-1zM46 40h2v1h-2zM49 40h1v1h-1zM53 40h1v1h-1zM56 40h1v1h-1zM0 41h1v1h-1zM2 41h1v1h-1zM4 41h1v1h-1zM6 41h2v1h-2zM9 41h1v1h-1zM14 41h2v1h-2zM17 41h1v1h-1zM20 41h2v1h-2zM26 41h3v1h-3zM30 41h1v1h-1zM33 41h1v1h-1zM36 41h1v1h-1zM41 41h1v1h-1zM44 41h3v1h-3zM56 41h1v1h-1zM1 42h2v1h-2zM4 42h1v1h-1zM6 42h1v1h-1zM12 42h1v1h-1zM14 42h1v1h-1zM17 42h2v1h-2zM23 42h1v1h-1zM25 42h1v1h-1zM34 42h4v1h-4zM39 42h1v1h-1zM44 42h3v1h-3zM50 42h1v1h-1zM53 42h1v1h-1zM1 43h2v1h-2zM5 43h1v1h-1zM8 43h1v1h-1zM10 43h2v1h-2zM13 43h5v1h-5zM21 43h4v1h-4zM26 43h2v1h-2zM34 43h1v1h-1zM38 43h1v1h-1zM40 43h2v1h-2zM43 43h1v1h-1zM46 43h1v1h-1zM50 43h4v1h-4zM56 43h1v1h-1zM0 44h2v1h-2zM3 44h3v1h-3zM8 44h1v1h-1zM12 44h1v1h-1zM14 44h8v1h-8zM26 44h1v1h-1zM28 44h3v1h-3zM33 44h2v1h-2zM36 44h1v1h-1zM39 44h5v1h-5zM45 44h2v1h-2zM48 44h2v1h-2zM51 44h2v1h-2zM56 44h1v1h-1zM2 45h1v1h-1zM7 45h1v1h-1zM9 45h1v1h-1zM13 45h1v1h-1zM15 45h2v1h-2zM18 45h1v1h-1zM20 45h2v1h-2zM23 45h1v1h-1zM25 45h1v1h-1zM29 45h1v1h-1zM35 45h1v1h-1zM40 45h1v1h-1zM42 45h1v1h-1zM45 45h1v1h-1zM49 45h1v1h-1zM53 45h1v1h-1zM55 45h2v1h-2zM1 46h1v1h-1zM6 46h1v1h-1zM8 46h2v1h-2zM13 46h3v1h-3zM17 46h2v1h-2zM20 46h2v1h-2zM24 46h4v1h-4zM30 46h1v1h-1zM33 46h1v1h-1zM36 46h1v1h-1zM39 46h1v1h-1zM41 46h4v1h-4zM49 46h2v1h-2zM52 46h1v1h-1zM54 46h3v1h-3zM3 47h2v1h-2zM6 47h1v1h-1zM9 47h3v1h-3zM13 47h1v1h-1zM15 47h1v1h-1zM19 47h3v1h-3zM25 47h3v1h-3zM29 47h2v1h-2zM33 47h3v1h-3zM37 47h7v1h-7zM45 47h2v1h-2zM48 47h1v1h-1zM50 47h1v1h-1zM0 48h2v1h-2zM3 48h1v1h-1zM8 48h4v1h-4zM14 48h2v1h-2zM21 48h2v1h-2zM28 48h2v1h-2zM33 48h1v1h-1zM37 48h1v1h-1zM39 48h3v1h-3zM43 48h1v1h-1zM46 48h1v1h-1zM50 48h2v1h-2zM54 48h2v1h-2zM9 49h1v1h-1zM12 49h1v1h-1zM14 49h1v1h-1zM18 49h2v1h-2zM21 49h5v1h-5zM27 49h2v1h-2zM30 49h1v1h-1zM34 49h1v1h-1zM36 49h1v1h-1zM38 49h1v1h-1zM40 49h1v1h-1zM43 49h2v1h-2zM47 49h4v1h-4zM56 49h1v1h-1zM0 50h7v1h-7zM9 50h3v1h-3zM14 50h1v1h-1zM19 50h2v1h-2zM22 50h1v1h-1zM24 50h3v1h-3zM32 50h1v1h-1zM34 50h4v1h-4zM39 50h3v1h-3zM45 50h6v1h-6zM52 50h2v1h-2zM55 50h2v1h-2zM0 51h1v1h-1zM6 51h1v1h-1zM8 51h1v1h-1zM11 51h1v1h-1zM14 51h2v1h-2zM17 51h1v1h-1zM20 51h3v1h-3zM27 51h2v1h-2zM31 51h1v1h-1zM35 51h1v1h-1zM45 51h2v1h-2zM48 51h1v1h-1zM50 51h1v1h-1zM52 51h2v1h-2zM55 51h2v1h-2zM0 52h1v1h-1zM2 52h3v1h-3zM6 52h1v1h-1zM9 52h6v1h-6zM17 52h1v1h-1zM19 52h1v1h-1zM24 52h4v1h-4zM29 52h1v1h-1zM31 52h1v1h-1zM34 52h1v1h-1zM36 52h4v1h-4zM44 52h4v1h-4zM52 52h2v1h-2zM55 52h2v1h-2zM0 53h1v1h-1zM2 53h3v1h-3zM6 53h1v1h-1zM8 53h1v1h-1zM17 53h1v1h-1zM20 53h4v1h-4zM27 53h2v1h-2zM33 53h2v1h-2zM37 53h1v1h-1zM40 53h3v1h-3zM44 53h3v1h-3zM48 53h3v1h-3zM53 53h3v1h-3zM0 54h1v1h-1zM2 54h3v1h-3zM6 54h1v1h-1zM8 54h1v1h-1zM10 54h2v1h-2zM13 54h1v1h-1zM15 54h2v1h-2zM18 54h2v1h-2zM21 54h1v1h-1zM24 54h2v1h-2zM27 54h2v1h-2zM30 54h1v1h-1zM32 54h1v1h-1zM36 54h1v1h-1zM40 54h1v1h-1zM42 54h1v1h-1zM46 54h1v1h-1zM48 54h2v1h-2zM52 54h2v1h-2zM56 54h1v1h-1zM0 55h1v1h-1zM6 55h1v1h-1zM8 55h1v1h-1zM11 55h1v1h-1zM19 55h1v1h-1zM21 55h3v1h-3zM25 55h2v1h-2zM31 55h1v1h-1zM33 55h3v1h-3zM38 55h4v1h-4zM44 55h2v1h-2zM47 55h1v1h-1zM49 55h6v1h-6zM56 55h1v1h-1zM0 56h7v1h-7zM8 56h2v1h-2zM11 56h4v1h-4zM16 56h1v1h-1zM20 56h1v1h-1zM22 56h1v1h-1zM24 56h4v1h-4zM34 56h1v1h-1zM37 56h1v1h-1zM39 56h1v1h-1zM46 56h4v1h-4zM51 56h3v1h-3zM55 56h1v1h-1z"/><rect x="22.6" y="22.6" width="12.4" height="12.4" rx="1.6" fill="#111"/><ellipse cx="27.4" cy="28" rx="3" ry="2.6" fill="#fff"/><ellipse cx="31" cy="30.2" rx="2.5" ry="2.1" fill="#fff" stroke="#111" stroke-width=".6"/></svg>
    </div>
  </div>

  <svg class="abs" style="left:201px;top:240px" width="60" height="40" viewBox="201 240 60 40">
    <clipPath id="cl"><rect x="201" y="249" width="215" height="192" rx="10"/></clipPath>
    <polyline clip-path="url(#cl)" points="159.5,261 207,261 276,194.5" fill="none" stroke="#2020c8" stroke-opacity=".5" stroke-width="7"/>
  </svg>

  <!-- center card -->
  <div class="card" style="left:461px;top:214px;width:215px;height:127px;background:#0b55c1">
    <h3 style="left:20.6px;top:17.2px">参加针对性的商业培训</h3>
    <p style="left:20px;top:38.8px">通过参加商业教育和技能培训，女性可以增强<br>自身的竞争力，提升在融资和市场营销等领域<br>的能力。<br>&nbsp;<br>像<span class="lat">Goldman Sachs</span>（高盛）的<span class="lat">10,000</span><br><span class="lat">Women</span>计划就通过提供全面的商业教育，帮<br>助女性创业者掌握必要的技能，从而更好地应<br>对创业中的挑战。</p>
  </div>

  <!-- photo -->
  <div class="abs" id="photo" style="left:469.7px;top:357.4px;width:99.3px;height:149.6px;overflow:hidden;background:#9fb0b6">
    <svg class="abs" style="left:0;top:0" width="100" height="149" viewBox="0 0 100 149">
      <defs>
        <linearGradient id="pbg" x1="0" y1="0" x2="1" y2="0"><stop offset="0" stop-color="#226b67"/><stop offset=".3" stop-color="#3f8a84"/><stop offset=".46" stop-color="#a9c4c4"/><stop offset=".56" stop-color="#dfe3e6"/><stop offset="1" stop-color="#d8dde1"/></linearGradient>
        <filter id="pb" x="-10%" y="-10%" width="120%" height="120%"><feGaussianBlur stdDeviation="1.3"/></filter>
      </defs>
      <rect x="0" y="9" width="100" height="100" fill="url(#pbg)"/>
      <g filter="url(#pb)">
        <rect x="62" y="12" width="12" height="50" fill="#c6d2d4"/>
        <rect x="84" y="30" width="16" height="80" fill="#b7c8cc"/>
        <rect x="44" y="26" width="18" height="84" fill="#6aa39d"/><rect x="56" y="20" width="2" height="10" fill="#8ab5b0"/>
        <ellipse cx="19" cy="24" rx="14" ry="12" fill="#2a211f"/>
        <path d="M12 26c6-8 22-9 27 0l2 16-4 18-10 8-10-6-5-14z" fill="#7c533f"/>
        <path d="M30 24l10 4 1 14-5 16-5-6z" fill="#a87a5e"/>
        <path d="M0 72l22-8 30 2 16 12 4 32H0z" fill="#533f8c"/>
        <path d="M8 84l12-6 14 4 10 10-6 12-20 2z" fill="#6d55a8"/>
        <path d="M0 92l30 6 20 12H0z" fill="#3a2470"/>
        <polygon points="0,64 100,50.5 100,59 0,73.5" fill="#e6e042"/>
      </g>
      <rect x="0" y="0" width="100" height="9.8" fill="#7fa1d7"/>
      <rect x="0" y="108.8" width="100" height="41" fill="#060606"/>
      <path d="M3 4h3.2M3 5.4h3.2M3 6.8h3.2" stroke="#1c2a44" stroke-width=".7"/>
      <circle cx="91" cy="4.6" r="1.3" fill="none" stroke="#1c2a44" stroke-width=".6"/><path d="M92 5.6l1.2 1.3" stroke="#1c2a44" stroke-width=".6"/>
    </svg>
    <div class="t" style="left:10px;top:2.2px;font-size:2.9px;line-height:3.2px;color:#1c2a44;font-weight:700">Goldman<br>Sachs</div>
    <div class="t big" style="left:10.8px;top:29.8px">高盛提供</div>
    <div class="t big" style="left:10.8px;top:57.2px">创业女性</div>
    <div class="t big" style="left:10.8px;top:83.6px">免费课程</div>
    <div class="t" style="left:4.2px;top:115.8px;font:400 9.8px/12px 'Liberation Serif',serif;color:#e8e8e8">10,000 Women</div>
    <div class="t" style="left:4.2px;top:129.4px;font-size:4px;line-height:6.25px;color:#c8c8c8">We provide entrepreneurs around the world with<br>business and management education, mentoring<br>and networking, and access to capital</div>
  </div>
  <svg class="abs" style="left:466.6px;top:378px" width="11" height="13" viewBox="0 0 12 14"><path d="M2 1l7 7H5.6l2 4-1.6.8-2-4L2 11z" fill="#111" stroke="#fff" stroke-width=".6"/></svg>

  <!-- course list -->
  <div class="t" id="course" style="left:583px;top:380px;font-size:8.5px;line-height:12.9px;color:#161616;-webkit-text-stroke:.15px #161616">课程模块:<br><span class="i">商业和金融</span><br><span class="i">领导力</span><br><span class="i">财务规划</span><br><span class="i">销售与数字营销</span><br><span class="i">项目运营和项目管理</span><br><span class="i">融资与谈判</span><br><span class="i">社会影响力与创新战略</span></div>

  <!-- right card -->
  <div class="card" style="left:735.3px;top:249px;width:215px;height:136.6px;background:#000">
    <h3 style="left:27.6px;top:31px">利用新兴融资渠道</h3>
    <p style="left:27.7px;top:49.9px">近年来，众筹平台和微型贷款等新兴融资形式<br>逐渐受到女性创业者的青睐。这些渠道不仅降<br>低了融资门槛，还为女性提供了更多的选择。<br>&nbsp;<br>例如众筹平台<span class="lat">:Kickstarter</span>、<span class="lat">Crowdcube</span>、<br><span class="lat">Seeders</span></p>
  </div>
  <svg class="abs" style="left:735px;top:230px" width="215" height="60" viewBox="735 230 215 60">
    <clipPath id="cc"><rect x="735" y="249" width="215" height="136" rx="10"/></clipPath>
    <polyline clip-path="url(#cc)" points="843,240.3 884,240.3 905.5,257.5 956.5,206" fill="none" stroke="#2626d0" stroke-opacity=".6" stroke-width="6"/>
  </svg>

  <!-- bottom bar -->
  <div class="abs" style="left:115.8px;top:537.3px;width:68.2px;height:47.5px;background:#fdfdfd"></div>
  <div class="abs" style="left:183.8px;top:537.3px;width:672px;height:46.7px;background:#2c6fc4"></div>
  <div class="abs" style="left:851.5px;top:536.5px;width:183px;height:47.5px;background:#000"></div>
  <svg class="abs" style="left:133px;top:546px" width="30" height="30" viewBox="0 0 30 30"><circle cx="15" cy="15" r="14" fill="#000"/><path d="M15 22.5V8.5M9.3 14L15 8.2 20.7 14" fill="none" stroke="#fff" stroke-width="2.4"/></svg>
  <div class="abs" style="left:201px;top:548px;width:242px;height:24px;background:#fff;border-radius:5px"></div>
  <svg class="abs" style="left:208px;top:553px" width="14" height="14" viewBox="0 0 14 14"><circle cx="5.6" cy="5.6" r="3.6" fill="none" stroke="#111" stroke-width="1.9"/><path d="M8.4 8.4l3.8 3.8" stroke="#111" stroke-width="2.2" stroke-linecap="round"/></svg>
  <svg class="abs" style="left:428px;top:555px" width="10" height="10" viewBox="0 0 10 10"><path d="M1.6 1.6l6.8 6.8M8.4 1.6L1.6 8.4" stroke="#222" stroke-width="1.5"/></svg>
  <div class="t" style="left:851px;top:552px;width:183px;text-align:center;font-size:11px;line-height:14px;color:#f2f2f2;letter-spacing:.62px">PAGE 05</div>
</div>
</div>

<!-- ===== speaker overlay ===== -->
<div class="abs" style="left:882.4px;top:0;width:198px;height:133.4px;background:#272727;border-radius:0 0 0 9px"></div>
<div class="abs" style="left:882.4px;top:0;width:198px;height:102.8px;background:#000"></div>
<div class="t" style="left:983.6px;top:55px;font-size:9.4px;line-height:12px;color:#f4f4f4;letter-spacing:.14px">Yolanda Yang</div>
<div class="t" style="left:890.5px;top:108px;font-size:15.3px;line-height:20px;color:#f2f2f2;font-family:'Liberation Sans','Noto Sans CJK SC',sans-serif">正在讲话：<span style="font-size:16.5px;margin-left:2px;letter-spacing:.05px">Yolanda Yang</span></div>

</div>
</body>
</html>
